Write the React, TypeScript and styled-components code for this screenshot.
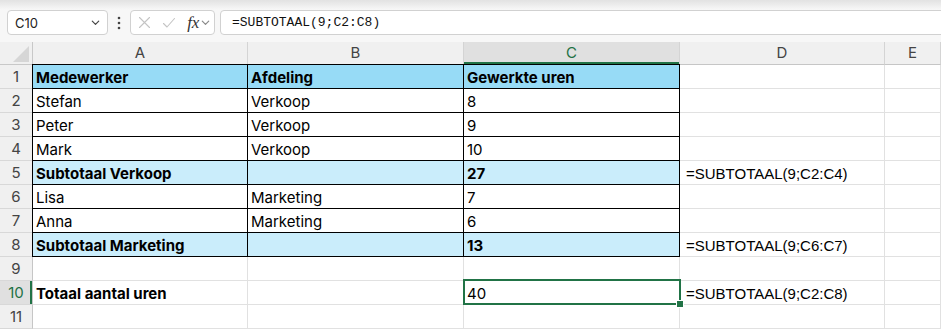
import React from "react";
import styled, { createGlobalStyle, css } from "styled-components";

const GlobalStyle = createGlobalStyle`
  html, body {
    margin: 0;
    padding: 0;
    background: #ffffff;
    overflow: hidden;
  }
`;

const COLORS = {
  GRID: "#e1e1e1",
  HEADER_BG: "#f0f0f0",
  HEADER_ACTIVE_BG: "#e0e0e0",
  HEADER_LINE: "#d4d4d4",
  HEADER_TEXT: "#444444",
  GREEN: "#1e7145",
  SELECT: "#217346",
  TITLE_FILL: "#97dbf6",
  SUB_FILL: "#caedfb",
};

const Page = styled.div`
  width: 941px;
  height: 330px;
  overflow: hidden;
  display: flex;
  flex-direction: column;
`;

const FormulaBar = styled.div`
  height: 42px;
  box-sizing: border-box;
  display: flex;
  align-items: flex-start;
  padding: 10px 0 0 7px;
  background: linear-gradient(#e2e2e2 0px, #efefef 6px, #f6f6f6 9px, #f7f7f7 10px);
  font-family: "Inter", "Noto Sans", sans-serif;
`;

const Box = styled.div`
  height: 25px;
  box-sizing: border-box;
  background: #ffffff;
  border: 1px solid #d1d1d1;
  border-radius: 4px;
  display: flex;
  align-items: center;
`;

const NameBox = styled(Box)`
  width: 101px;
  padding: 0 6px 0 7px;
  justify-content: space-between;
  font-size: 13px;
  color: #222;
`;

const Dots = styled.div`
  width: 22px;
  height: 25px;
  display: flex;
  align-items: center;
  justify-content: center;
`;

const ActionBox = styled(Box)`
  width: 85px;
  padding: 0 3px 0 7px;
  justify-content: space-between;
`;

const FxGroup = styled.span`
  display: flex;
  align-items: center;
  gap: 1px;
`;

const Fx = styled.span`
  font-family: "Liberation Serif", "DejaVu Serif", serif;
  font-style: italic;
  font-size: 17px;
  color: #333;
  letter-spacing: -0.3px;
`;

const FormulaInput = styled(Box)`
  flex: 1;
  margin-left: 5px;
  margin-right: -12px;
  padding-left: 11px;
  font-family: "Liberation Mono", "DejaVu Sans Mono", monospace;
  font-size: 13px;
  color: #111;
`;

const Sheet = styled.div`
  display: grid;
  grid-template-columns: 33px 215px 216px 216px 205px 56px;
  grid-template-rows: 23px repeat(11, 24px);
  font-family: "Inter", "Noto Sans", sans-serif;
`;

const Corner = styled.div`
  background: ${COLORS.HEADER_BG};
  border-right: 1px solid #c8c8c8;
  border-bottom: 1px solid #c8c8c8;
  display: flex;
  align-items: flex-end;
  justify-content: flex-end;
  padding: 0 3px 2px 0;
`;

const ColHeader = styled.div<{ $active?: boolean }>`
  box-sizing: border-box;
  background: ${(p) => (p.$active ? COLORS.HEADER_ACTIVE_BG : COLORS.HEADER_BG)};
  color: ${(p) => (p.$active ? COLORS.GREEN : COLORS.HEADER_TEXT)};
  border-right: 1px solid ${COLORS.HEADER_LINE};
  border-bottom: 1px solid #c6c6c6;
  ${(p) => p.$active && css`box-shadow: inset 0 -2px 0 ${COLORS.SELECT};`}
  font-size: 15px;
  line-height: 22px;
  text-align: center;
`;

const RowHeader = styled.div<{ $active?: boolean }>`
  box-sizing: border-box;
  background: ${(p) => (p.$active ? COLORS.HEADER_ACTIVE_BG : COLORS.HEADER_BG)};
  color: ${(p) => (p.$active ? COLORS.GREEN : COLORS.HEADER_TEXT)};
  border-right: 1px solid #c6c6c6;
  border-bottom: 1px solid #d8d8d8;
  ${(p) => p.$active && css`box-shadow: inset -2px 0 0 ${COLORS.SELECT};`}
  font-size: 15px;
  line-height: 24px;
  text-align: center;
`;

type Fill = "title" | "sub" | undefined;

const Cell = styled.div<{ $fill?: Fill; $bold?: boolean; $boxed?: boolean; $first?: boolean; $top?: boolean; $formula?: boolean }>`
  position: relative;
  box-sizing: border-box;
  padding: 2px 0 0 3px;
  white-space: nowrap;
  font-size: 15px;
  line-height: 22px;
  color: #000;
  font-weight: ${(p) => (p.$bold ? 700 : 400)};
  background: ${(p) =>
    p.$fill === "title" ? COLORS.TITLE_FILL : p.$fill === "sub" ? COLORS.SUB_FILL : "#ffffff"};
  border-right: 1px solid ${(p) => (p.$boxed ? "#000" : COLORS.GRID)};
  border-bottom: 1px solid ${(p) => (p.$boxed ? "#000" : COLORS.GRID)};
  ${(p) => p.$first && css`box-shadow: -1px 0 0 #000;`}
  ${(p) => p.$top && css`box-shadow: 0 -1px 0 #000${p.$first ? ", -1px 0 0 #000, -1px -1px 0 #000" : ""};`}
  ${(p) =>
    p.$formula &&
    css`
      font-family: "Liberation Sans", Arial, sans-serif;
      padding-left: 6px;
    `}
`;

const Selection = styled.div`
  position: absolute;
  top: -2px;
  left: -1px;
  right: -2px;
  bottom: -1px;
  border: 2px solid ${COLORS.SELECT};
  pointer-events: none;
  z-index: 2;
`;

const FillHandle = styled.div`
  position: absolute;
  right: -5px;
  bottom: -5px;
  width: 6px;
  height: 6px;
  background: ${COLORS.SELECT};
  border: 1px solid #ffffff;
`;

const Chevron = ({ color = "#444" }: { color?: string }) => (
  <svg width="11" height="11" viewBox="0 0 12 12">
    <path d="M2.5 4.5 L6 8 L9.5 4.5" fill="none" stroke={color} strokeWidth="1.3" strokeLinecap="round" strokeLinejoin="round" />
  </svg>
);

type Row = {
  a?: string;
  b?: string;
  c?: string;
  d?: string;
  fill?: Fill;
  bold?: boolean;
  cBold?: boolean;
  boxed?: boolean;
};

const ROWS: Row[] = [
  { a: "Medewerker", b: "Afdeling", c: "Gewerkte uren", fill: "title", bold: true, cBold: true, boxed: true },
  { a: "Stefan", b: "Verkoop", c: "8", boxed: true },
  { a: "Peter", b: "Verkoop", c: "9", boxed: true },
  { a: "Mark", b: "Verkoop", c: "10", boxed: true },
  { a: "Subtotaal Verkoop", c: "27", d: "=SUBTOTAAL(9;C2:C4)", fill: "sub", bold: true, cBold: true, boxed: true },
  { a: "Lisa", b: "Marketing", c: "7", boxed: true },
  { a: "Anna", b: "Marketing", c: "6", boxed: true },
  { a: "Subtotaal Marketing", c: "13", d: "=SUBTOTAAL(9;C6:C7)", fill: "sub", bold: true, cBold: true, boxed: true },
  {},
  { a: "Totaal aantal uren", c: "40", d: "=SUBTOTAAL(9;C2:C8)", bold: true },
  {},
];

const COLS = ["A", "B", "C", "D", "E"];
const ACTIVE_ROW = 10;

const App = () => {
  return (
    <Page>
      <GlobalStyle />
      <FormulaBar>
        <NameBox>
          <span>C10</span>
          <Chevron />
        </NameBox>
        <Dots>
          <svg width="4" height="14" viewBox="0 0 4 14">
            <circle cx="2" cy="2" r="1.3" fill="#444" />
            <circle cx="2" cy="7" r="1.3" fill="#444" />
            <circle cx="2" cy="12" r="1.3" fill="#444" />
          </svg>
        </Dots>
        <ActionBox>
          <svg width="13" height="13" viewBox="0 0 13 13">
            <path d="M1.5 1.5 L11.5 11.5 M11.5 1.5 L1.5 11.5" stroke="#c4c4c4" strokeWidth="1.1" strokeLinecap="round" />
          </svg>
          <svg width="14" height="12" viewBox="0 0 14 12">
            <path d="M1.5 6.5 L5 10 L12.5 1.5" fill="none" stroke="#c4c4c4" strokeWidth="1.1" strokeLinecap="round" strokeLinejoin="round" />
          </svg>
          <FxGroup>
            <Fx>fx</Fx>
            <Chevron color="#888" />
          </FxGroup>
        </ActionBox>
        <FormulaInput>=SUBTOTAAL(9;C2:C8)</FormulaInput>
      </FormulaBar>
      <Sheet>
        <Corner>
          <svg width="16" height="16" viewBox="0 0 16 16">
            <path d="M16 0 L16 16 L0 16 Z" fill="#d6d6d6" />
          </svg>
        </Corner>
        {COLS.map((c) => (
          <ColHeader key={c} $active={c === "C"}>
            {c}
          </ColHeader>
        ))}
        {ROWS.map((r, i) => {
          const n = i + 1;
          const top = n === 1;
          return (
            <React.Fragment key={n}>
              <RowHeader $active={n === ACTIVE_ROW}>{n}</RowHeader>
              <Cell $fill={r.fill} $bold={r.bold} $boxed={r.boxed} $first={r.boxed} $top={top}>
                {r.a}
              </Cell>
              <Cell $fill={r.fill} $bold={r.bold} $boxed={r.boxed} $top={top}>
                {r.b}
              </Cell>
              <Cell $fill={r.fill} $bold={r.cBold} $boxed={r.boxed} $top={top}>
                {r.c}
                {n === ACTIVE_ROW && (
                  <Selection>
                    <FillHandle />
                  </Selection>
                )}
              </Cell>
              <Cell $formula>{r.d}</Cell>
              <Cell />
            </React.Fragment>
          );
        })}
      </Sheet>
    </Page>
  );
};

export default App;
